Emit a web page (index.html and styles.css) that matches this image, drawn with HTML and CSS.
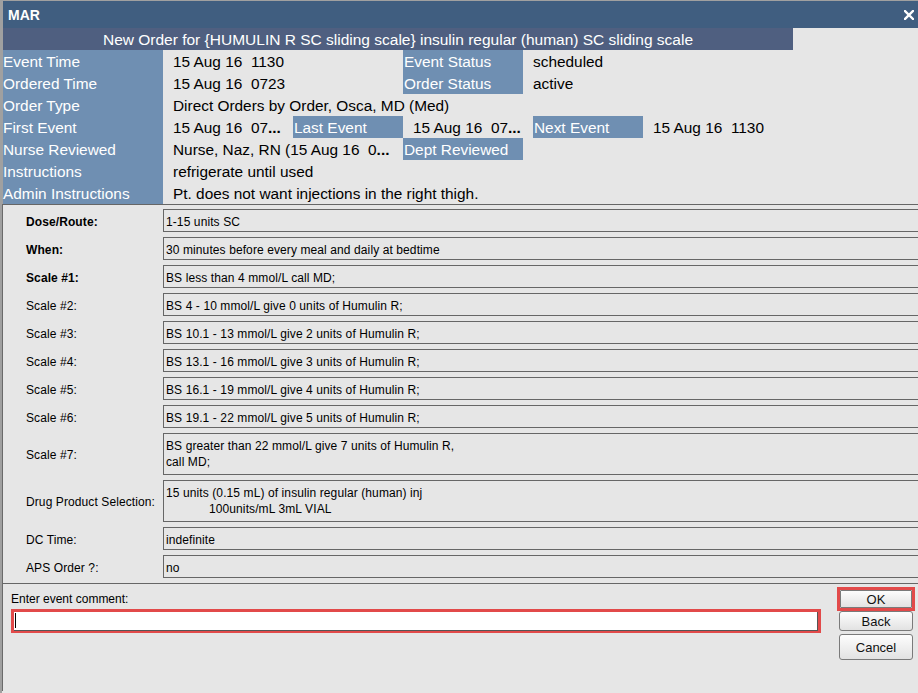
FILE: index.html
```html
<!DOCTYPE html>
<html lang="en">
<head>
    <meta charset="UTF-8" />
    <meta name="viewport" content="width=device-width, initial-scale=1.0" />
    <title>MAR</title>
    <link rel="stylesheet" href="styles.css">
</head>
<body>

<div class="window">
    <div class="titlebar">
        <span class="title">MAR</span>
        <svg class="close" width="10" height="10" viewBox="0 0 10 10">
            <path d="M1 1 L9 9 M9 1 L1 9" stroke="#ffffff" stroke-width="2.4" stroke-linecap="square" />
        </svg>
    </div>

    <div class="banner">New Order for {HUMULIN R SC sliding scale} insulin regular (human) SC sliding scale</div>

    <div class="summary">
        <div class="row">
            <div class="lbl w160">Event Time</div>
            <div class="val w240">15 Aug 16&nbsp; 1130</div>
            <div class="lbl w120">Event Status</div>
            <div class="val">scheduled</div>
        </div>
        <div class="row">
            <div class="lbl w160">Ordered Time</div>
            <div class="val w240">15 Aug 16&nbsp; 0723</div>
            <div class="lbl w120">Order Status</div>
            <div class="val">active</div>
        </div>
        <div class="row">
            <div class="lbl w160">Order Type</div>
            <div class="val">Direct Orders by Order, Osca, MD (Med)</div>
        </div>
        <div class="row">
            <div class="lbl w160">First Event</div>
            <div class="val w130">15 Aug 16&nbsp; 07<b>...</b></div>
            <div class="lbl w110">Last Event</div>
            <div class="val w130">15 Aug 16&nbsp; 07<b>...</b></div>
            <div class="lbl w110">Next Event</div>
            <div class="val">15 Aug 16&nbsp; 1130</div>
        </div>
        <div class="row">
            <div class="lbl w160">Nurse Reviewed</div>
            <div class="val w240">Nurse, Naz, RN (15 Aug 16&nbsp; 0<b>...</b></div>
            <div class="lbl w120">Dept Reviewed</div>
        </div>
        <div class="row">
            <div class="lbl w160">Instructions</div>
            <div class="val">refrigerate until used</div>
        </div>
        <div class="row">
            <div class="lbl w160">Admin Instructions</div>
            <div class="val">Pt. does not want injections in the right thigh.</div>
        </div>
    </div>

    <div class="details">
        <div class="drow">
            <div class="dlabel bold">Dose/Route:</div>
            <div class="dbox">1-15 units SC</div>
        </div>
        <div class="drow">
            <div class="dlabel bold">When:</div>
            <div class="dbox">30 minutes before every meal and daily at bedtime</div>
        </div>
        <div class="drow">
            <div class="dlabel bold">Scale #1:</div>
            <div class="dbox">BS less than 4 mmol/L call MD;</div>
        </div>
        <div class="drow">
            <div class="dlabel">Scale #2:</div>
            <div class="dbox">BS 4 - 10 mmol/L give 0 units of Humulin R;</div>
        </div>
        <div class="drow">
            <div class="dlabel">Scale #3:</div>
            <div class="dbox">BS 10.1 - 13 mmol/L give 2 units of Humulin R;</div>
        </div>
        <div class="drow">
            <div class="dlabel">Scale #4:</div>
            <div class="dbox">BS 13.1 - 16 mmol/L give 3 units of Humulin R;</div>
        </div>
        <div class="drow">
            <div class="dlabel">Scale #5:</div>
            <div class="dbox">BS 16.1 - 19 mmol/L give 4 units of Humulin R;</div>
        </div>
        <div class="drow">
            <div class="dlabel">Scale #6:</div>
            <div class="dbox">BS 19.1 - 22 mmol/L give 5 units of Humulin R;</div>
        </div>
        <div class="drow tall">
            <div class="dlabel">Scale #7:</div>
            <div class="dbox">BS greater than 22 mmol/L give 7 units of Humulin R,<br>call MD;</div>
        </div>
        <div class="drow tall">
            <div class="dlabel">Drug Product Selection:</div>
            <div class="dbox">15 units (0.15 mL) of insulin regular (human) inj<div class="indent">100units/mL 3mL VIAL</div></div>
        </div>
        <div class="drow">
            <div class="dlabel">DC Time:</div>
            <div class="dbox">indefinite</div>
        </div>
        <div class="drow">
            <div class="dlabel">APS Order ?:</div>
            <div class="dbox">no</div>
        </div>
    </div>

    <div class="footer">
        <div class="comment">
            <div class="comment-label">Enter event comment:</div>
            <div class="comment-field">
                <div class="comment-input"><span class="caret"></span></div>
            </div>
        </div>
        <div class="buttons">
            <div class="focus-ring"><button class="btn btn-ok">OK</button></div>
            <button class="btn btn-back">Back</button>
            <button class="btn btn-cancel">Cancel</button>
        </div>
    </div>
</div>

</body>
</html>
```

FILE: styles.css
```css
body {
    margin: 0;
    background-color: #e6e6e6;
    font-family: "Liberation Sans", Arial, sans-serif;
    overflow: hidden;
}

.window {
    width: 916px;
    height: 692px;
    border-top: 1px solid #a0a0a0;
    border-left: 2px solid #a0a0a0;
    background-color: #e6e6e6;
    overflow: hidden;
}

.titlebar {
    height: 27px;
    background-color: #405e80;
    border-left: 1px solid #a0a0a0;
    display: flex;
    align-items: center;
    justify-content: space-between;
    padding: 0 4px 0 5px;
}

.title {
    color: #ffffff;
    font-weight: bold;
    font-size: 14px;
}

.close {
    display: block;
}

.banner {
    width: 790px;
    height: 22px;
    line-height: 23px;
    background-color: #4f5f80;
    border-left: 1px solid #a0a0a0;
    color: #ffffff;
    font-size: 15.5px;
    text-align: center;
    white-space: nowrap;
}

.summary {
    border-left: 1px solid #a0a0a0;
    font-size: 15.4px;
}

.row {
    display: flex;
    height: 22px;
    line-height: 23px;
    white-space: nowrap;
}

.lbl {
    background-color: #6f8fb2;
    color: #ffffff;
    padding-left: 1px;
    box-sizing: border-box;
}

.val {
    color: #000000;
    padding-left: 10px;
    box-sizing: border-box;
    overflow: hidden;
}

.w160 { width: 160px; padding-left: 0; }
.w240 { width: 240px; }
.w130 { width: 130px; }
.w120 { width: 120px; }
.w110 { width: 110px; }

.details {
    border-top: 1px solid #666666;
    border-bottom: 1px solid #666666;
    border-left: 1px solid #6a6a6a;
    padding: 4px 0 5px 0;
    overflow: hidden;
}

.drow {
    display: flex;
    height: 23px;
    margin-bottom: 5px;
    font-size: 12px;
    letter-spacing: 0.1px;
}

.drow:last-child {
    margin-bottom: 0;
}

.drow.tall {
    height: 42px;
}

.dlabel {
    width: 160px;
    padding-left: 23px;
    padding-top: 2px;
    box-sizing: border-box;
    display: flex;
    align-items: center;
    color: #000000;
}

.dlabel.bold {
    font-weight: bold;
}

.dbox {
    flex: 1;
    margin-right: -6px;
    border: 1px solid #666666;
    padding: 4px 0 0 2px;
    line-height: 16px;
    color: #000000;
    white-space: nowrap;
}

.indent {
    padding-left: 43px;
}

.footer {
    display: flex;
    height: 107px;
    border-left: 1px solid #6a6a6a;
    padding-top: 3px;
    box-sizing: border-box;
}

.comment {
    width: 818px;
    padding-left: 8px;
    padding-top: 4px;
    box-sizing: border-box;
}

.comment-label {
    font-size: 12px;
    line-height: 16px;
    color: #000000;
}

.comment-field {
    margin-top: 2px;
    width: 810px;
    height: 24px;
    border: 3px solid #e24a4a;
    box-sizing: border-box;
}

.comment-input {
    height: 18px;
    background-color: #ffffff;
    border-right: 1px solid #555555;
    border-bottom: 1px solid #555555;
    position: relative;
}

.caret {
    position: absolute;
    left: 1px;
    top: 1px;
    width: 1px;
    height: 15px;
    background-color: #000000;
}

.buttons {
    margin-left: auto;
    margin-right: 3px;
    width: 78px;
    display: flex;
    flex-direction: column;
    align-items: center;
}

.focus-ring {
    width: 78px;
    height: 24px;
    border: 3px solid #e24a4a;
    box-sizing: border-box;
}

.btn {
    display: block;
    width: 74px;
    padding: 0;
    border: 1px solid #7a7a7a;
    border-radius: 3px;
    background: linear-gradient(#fdfdfd, #e2e2e2);
    font-family: "Liberation Sans", Arial, sans-serif;
    font-size: 13px;
    color: #111111;
    box-sizing: border-box;
}

.btn-ok {
    width: 72px;
    height: 18px;
    border-radius: 1px;
}

.btn-back {
    height: 20px;
}

.btn-cancel {
    height: 26px;
    margin-top: 3px;
}
```
